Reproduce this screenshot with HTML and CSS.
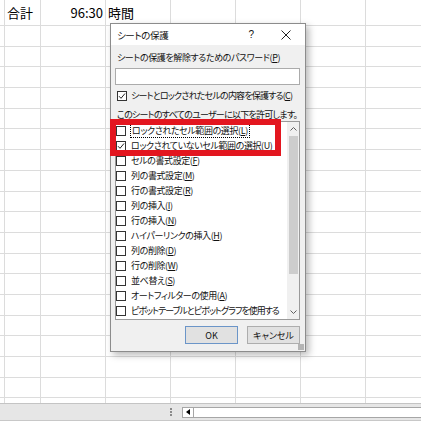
FILE: index.html
```html
<!DOCTYPE html>
<html lang="ja">
<head>
<meta charset="utf-8">
<link rel="stylesheet" href="styles.css">
</head>
<body>
<div class="sheet">
  <div class="row"><span></span><span class="t-left">合計</span><span class="t-right">96:30</span><span class="t-left">時間</span><span></span><span></span><span></span><span></span></div>
  <div class="row"><span></span><span></span><span></span><span></span><span></span><span></span><span></span><span></span></div>
  <div class="row"><span></span><span></span><span></span><span></span><span></span><span></span><span></span><span></span></div>
  <div class="row"><span></span><span></span><span></span><span></span><span></span><span></span><span></span><span></span></div>
  <div class="row"><span></span><span></span><span></span><span></span><span></span><span></span><span></span><span></span></div>
  <div class="row"><span></span><span></span><span></span><span></span><span></span><span></span><span></span><span></span></div>
  <div class="row"><span></span><span></span><span></span><span></span><span></span><span></span><span></span><span></span></div>
  <div class="row"><span></span><span></span><span></span><span></span><span></span><span></span><span></span><span></span></div>
  <div class="row"><span></span><span></span><span></span><span></span><span></span><span></span><span></span><span></span></div>
  <div class="row"><span></span><span></span><span></span><span></span><span></span><span></span><span></span><span></span></div>
  <div class="row"><span></span><span></span><span></span><span></span><span></span><span></span><span></span><span></span></div>
  <div class="row"><span></span><span></span><span></span><span></span><span></span><span></span><span></span><span></span></div>
  <div class="row"><span></span><span></span><span></span><span></span><span></span><span></span><span></span><span></span></div>
  <div class="row"><span></span><span></span><span></span><span></span><span></span><span></span><span></span><span></span></div>
  <div class="row"><span></span><span></span><span></span><span></span><span></span><span></span><span></span><span></span></div>
  <div class="row"><span></span><span></span><span></span><span></span><span></span><span></span><span></span><span></span></div>
  <div class="row"><span></span><span></span><span></span><span></span><span></span><span></span><span></span><span></span></div>
  <div class="row"><span></span><span></span><span></span><span></span><span></span><span></span><span></span><span></span></div>
  <div class="row"><span></span><span></span><span></span><span></span><span></span><span></span><span></span><span></span></div>
  <div class="row"><span></span><span></span><span></span><span></span><span></span><span></span><span></span><span></span></div>
</div>
<div class="statusbar">
  <div class="split"></div>
  <div class="hscroll">
    <div class="hs-left"><i class="tri"></i></div>
  </div>
</div>

<div class="dialog">
  <div class="titlebar">
    <span class="title">シートの保護</span>
    <span class="help">?</span>
    <span class="close"><svg width="10" height="10" viewBox="0 0 10 10"><path d="M0.5 0.5L9.5 9.5M9.5 0.5L0.5 9.5" stroke="#222" stroke-width="1" fill="none"/></svg></span>
  </div>
  <div class="body">
    <div class="label">シートの保護を解除するためのパスワード(<u>P</u>)</div>
    <div class="input"></div>
    <div class="checkrow"><span class="cb on"><svg width="8" height="8" viewBox="0 0 8 8"><path d="M1 4.2L3 6.3L7 1.5" stroke="#222" stroke-width="1" fill="none"/></svg></span><span class="tight-c">シートとロックされたセルの内容を保護する(<u>C</u>)</span></div>
    <div class="allow">このシートのすべてのユーザーに以下を許可します。</div>
    <div class="list">
      <div class="items">
        <div class="item"><span class="cb"></span><span class="focus">ロックされたセル範囲の選択(<u>L</u>)</span></div>
        <div class="item"><span class="cb on"><svg width="8" height="8" viewBox="0 0 8 8"><path d="M1 4.2L3 6.3L7 1.5" stroke="#222" stroke-width="1" fill="none"/></svg></span><span>ロックされていないセル範囲の選択(<u>U</u>)</span></div>
        <div class="item"><span class="cb"></span><span>セルの書式設定(<u>F</u>)</span></div>
        <div class="item"><span class="cb"></span><span>列の書式設定(<u>M</u>)</span></div>
        <div class="item"><span class="cb"></span><span>行の書式設定(<u>R</u>)</span></div>
        <div class="item"><span class="cb"></span><span>列の挿入(<u>I</u>)</span></div>
        <div class="item"><span class="cb"></span><span>行の挿入(<u>N</u>)</span></div>
        <div class="item"><span class="cb"></span><span>ハイパーリンクの挿入(<u>H</u>)</span></div>
        <div class="item"><span class="cb"></span><span>列の削除(<u>D</u>)</span></div>
        <div class="item"><span class="cb"></span><span>行の削除(<u>W</u>)</span></div>
        <div class="item"><span class="cb"></span><span>並べ替え(<u>S</u>)</span></div>
        <div class="item"><span class="cb"></span><span>オートフィルターの使用(<u>A</u>)</span></div>
        <div class="item"><span class="cb"></span><span class="tight-p">ピボットテーブルとピボットグラフを使用する</span></div>
      </div>
      <div class="vscroll">
        <div class="arrow"><svg width="7" height="4" viewBox="0 0 7 4"><path d="M0.5 3.5L3.5 0.5L6.5 3.5" stroke="#606060" stroke-width="1" fill="none"/></svg></div>
        <div class="thumb"></div>
        <div class="track"></div>
        <div class="arrow"><svg width="7" height="4" viewBox="0 0 7 4"><path d="M0.5 0.5L3.5 3.5L6.5 0.5" stroke="#606060" stroke-width="1" fill="none"/></svg></div>
      </div>
    </div>
    <div class="buttons">
      <span class="btn default">OK</span>
      <span class="btn">キャンセル</span>
    </div>
  </div>
  <div class="grip"></div>
</div>
<div class="highlight"></div>
</body>
</html>
```
FILE: styles.css
```css
* { box-sizing: border-box; margin: 0; padding: 0; }
html, body { width: 421px; height: 421px; overflow: hidden; background: #fff; }
body {
  font-family: "Noto Sans CJK JP", "Noto Sans", sans-serif;
  color: #000;
  position: relative;
}

/* spreadsheet */
.sheet {
  display: grid;
  grid-template-rows: 26px repeat(18, 20.7px) 1fr;
  height: 403px;
}
.row {
  display: grid;
  grid-template-columns: 5px 36px repeat(5, 65px) 1fr;
}
.row > span {
  border-right: 1px solid #dcdcdc;
  border-bottom: 1px solid #dcdcdc;
  font-size: 13px;
  line-height: 16px;
  display: flex;
  align-items: flex-end;
  padding-bottom: 4px;
  white-space: nowrap;
}
.row > span:last-child { border-right: none; }
.row:last-child > span { border-bottom: none; }
.t-left { padding-left: 2px; }
.t-right { justify-content: flex-end; padding-right: 2px; }

.statusbar {
  height: 18px;
  background: #e6e6e6;
  border-top: 1px solid #c4c4c4;
  border-bottom: 1px solid #c8c8c8;
  display: flex;
  align-items: center;
  padding-left: 170px;
}
.split {
  width: 2px;
  height: 8px;
  background: repeating-linear-gradient(#8a8a8a 0 2px, transparent 2px 3px);
  margin-right: 10px;
}
.hscroll {
  flex: 1;
  height: 11px;
  background: #fff;
  border: 1px solid #a6a6a6;
  border-right: none;
  display: flex;
}
.hs-left {
  width: 11px;
  border-right: 1px solid #a6a6a6;
  display: flex;
  align-items: center;
  justify-content: center;
}
.tri {
  width: 0; height: 0;
  border-right: 4px solid #000;
  border-top: 3px solid transparent;
  border-bottom: 3px solid transparent;
}

/* dialog */
.dialog {
  position: absolute;
  left: 110px;
  top: 23px;
  width: 196px;
  height: 329px;
  border: 1px solid #8c8c8c;
  background: #f0f0f0;
  box-shadow: 3px 3px 7px rgba(0,0,0,.28);
  display: flex;
  flex-direction: column;
  font-size: 9px;
  letter-spacing: -0.4px;
  font-feature-settings: "palt";
  color: #111;
}
.titlebar {
  height: 21px;
  background: #fff;
  display: flex;
  align-items: center;
  padding-left: 6px;
}
.title { line-height: 14px; font-size: 9.5px; }
.help {
  width: 20px;
  margin-left: auto;
  text-align: center;
  font-family: "Liberation Sans", sans-serif;
  font-size: 10px;
}
.close {
  width: 30px;
  margin-left: 10px;
  margin-right: 4px;
  display: flex;
  justify-content: center;
}
.body {
  flex: 1;
  padding: 6px 5px 0 4px;
  display: flex;
  flex-direction: column;
}
.label { line-height: 14px; padding-left: 2px; white-space: nowrap; }
.input {
  margin-top: 3px;
  height: 17px;
  background: #fff;
  border: 1px solid #ababab;
}
.checkrow {
  margin-top: 4px;
  line-height: 14px;
  display: flex;
  align-items: center;
  white-space: nowrap;
}
.checkrow .cb { margin-left: 2px; margin-right: 4px; }
.tight-c { letter-spacing: -0.8px; }
.tight-p { letter-spacing: -1px; }
.cb {
  width: 10px;
  height: 10px;
  border: 1px solid #333;
  background: #fff;
  flex: none;
  display: flex;
  align-items: center;
  justify-content: center;
}
.allow { margin-top: 6px; line-height: 12px; padding-left: 2px; white-space: nowrap; letter-spacing: -0.75px; }
.list {
  height: 199px;
  background: #fff;
  border: 1px solid #9a9a9a;
  display: flex;
}
.items { flex: 1; padding-top: 1px; overflow: hidden; }
.item {
  height: 15px;
  display: flex;
  align-items: center;
  white-space: nowrap;
}
.item .cb { margin-right: 5px; }
.focus { outline: 1px dotted #000; outline-offset: 0; padding: 0 1px; line-height: 12px; }
.vscroll {
  width: 12px;
  background: #f0f0f0;
  display: flex;
  flex-direction: column;
  align-items: center;
}
.arrow {
  height: 14px;
  width: 12px;
  display: flex;
  align-items: center;
  justify-content: center;
}
.thumb { width: 9px; height: 138px; background: #cdcdcd; }
.track { flex: 1; }
.buttons {
  margin-top: 6px;
  display: flex;
  justify-content: flex-end;
  gap: 9px;
}
.btn {
  width: 53px;
  height: 18px;
  background: #e1e1e1;
  border: 1px solid #adadad;
  display: flex;
  align-items: center;
  justify-content: center;
  letter-spacing: 0;
}
.btn.default { border-color: #6b95c8; }
.grip {
  position: absolute;
  right: 1px;
  bottom: 1px;
  width: 6px;
  height: 6px;
  background: radial-gradient(circle, #b0b0b0 0.7px, transparent 0.8px) 0 0 / 2px 2px;
}

.highlight {
  position: absolute;
  left: 110px;
  top: 119px;
  width: 171px;
  height: 37px;
  border: 6px solid #e3161f;
}
```
